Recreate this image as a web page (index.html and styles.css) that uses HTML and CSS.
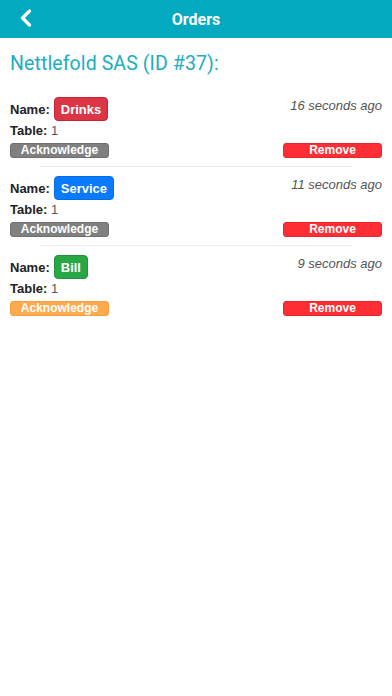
FILE: index.html
```html
<!DOCTYPE html>
<html>
<head>
<meta charset="utf-8">
<link rel="stylesheet" href="styles.css">
</head>
<body>
<header class="topbar">
  <span class="back">
    <svg width="14" height="18" viewBox="0 0 14 18"><path d="M10.5 2 L3.5 9 L10.5 16" fill="none" stroke="#fff" stroke-width="3.2" stroke-linecap="round" stroke-linejoin="round"/></svg>
  </span>
  <h1 class="topbar-title">Orders</h1>
</header>
<main>
  <h2 class="client">Nettlefold SAS (ID #37):</h2>
  <section class="order">
    <div class="line-top">
      <div class="name"><b>Name:</b><span class="badge badge-red">Drinks</span></div>
      <span class="time">16 seconds ago</span>
    </div>
    <div class="table"><b>Table:</b> 1</div>
    <div class="actions">
      <button class="btn btn-gray">Acknowledge</button>
      <button class="btn btn-remove">Remove</button>
    </div>
  </section>
  <hr class="sep">
  <section class="order">
    <div class="line-top">
      <div class="name"><b>Name:</b><span class="badge badge-blue">Service</span></div>
      <span class="time">11 seconds ago</span>
    </div>
    <div class="table"><b>Table:</b> 1</div>
    <div class="actions">
      <button class="btn btn-gray">Acknowledge</button>
      <button class="btn btn-remove">Remove</button>
    </div>
  </section>
  <hr class="sep">
  <section class="order">
    <div class="line-top">
      <div class="name"><b>Name:</b><span class="badge badge-green">Bill</span></div>
      <span class="time">9 seconds ago</span>
    </div>
    <div class="table"><b>Table:</b> 1</div>
    <div class="actions">
      <button class="btn btn-orange">Acknowledge</button>
      <button class="btn btn-remove">Remove</button>
    </div>
  </section>
</main>
</body>
</html>
```
FILE: styles.css
```css
* { box-sizing: border-box; }
html, body { margin: 0; padding: 0; background: #fff; }
body { font-family: "Liberation Sans", Arial, sans-serif; color: #333; width: 392px; height: 696px; }

.topbar {
  height: 38px;
  background: #03a9be;
  display: flex;
  align-items: center;
  justify-content: center;
  position: relative;
}
.back {
  position: absolute;
  left: 19px;
  top: 9px;
  width: 14px;
  height: 18px;
  display: flex;
}
.topbar-title {
  margin: 0;
  font-family: Roboto, "Liberation Sans", sans-serif;
  font-weight: 700;
  font-size: 16px;
  color: #fff;
}

.client {
  margin: 0;
  padding: 15px 10px 0;
  height: 50px;
  font-family: Roboto, "Liberation Sans", sans-serif;
  font-weight: 400;
  font-size: 19.5px;
  line-height: 22px;
  color: #20adc0;
  letter-spacing: 0.1px;
}

.order {
  padding: 9px 10px 8px;
}
.line-top {
  display: flex;
  justify-content: space-between;
  align-items: flex-start;
  height: 24px;
}
.name {
  display: flex;
  align-items: center;
  height: 24px;
  font-size: 13px;
}
.name b { color: #222; margin-right: 4px; }
.badge {
  display: inline-flex;
  align-items: center;
  height: 24px;
  padding: 0 6px;
  border-radius: 4px;
  color: #fff;
  font-weight: 700;
  font-size: 13px;
}
.badge-red { background: #dc3545; border: 1px solid #c82333; }
.badge-blue { background: #0a7bff; border: 1px solid #006fe6; }
.badge-green { background: #28a745; border: 1px solid #23913d; }

.time {
  margin-top: 1px;
  font-style: italic;
  font-size: 13px;
  line-height: 16px;
  color: #555;
}
.table {
  margin-top: 1px;
  height: 18px;
  line-height: 18px;
  font-size: 13px;
  color: #555;
}
.table b { color: #222; }

.actions {
  margin-top: 3px;
  display: flex;
  justify-content: space-between;
}
.btn {
  width: 99px;
  height: 15px;
  padding: 0;
  border-radius: 3px;
  font-family: "Liberation Sans", Arial, sans-serif;
  font-weight: 700;
  font-size: 12px;
  line-height: 13px;
  color: #fff;
  text-align: center;
}
.btn-gray { background: #808080; border: 1px solid #6f6f6f; }
.btn-orange { background: #ffaa4c; border: 1px solid #f5a040; }
.btn-remove { background: #ff2e35; border: 1px solid #e8262c; }

.sep {
  margin: 0 40px;
  border: 0;
  border-top: 1px solid #ececec;
  height: 0;
}
```
